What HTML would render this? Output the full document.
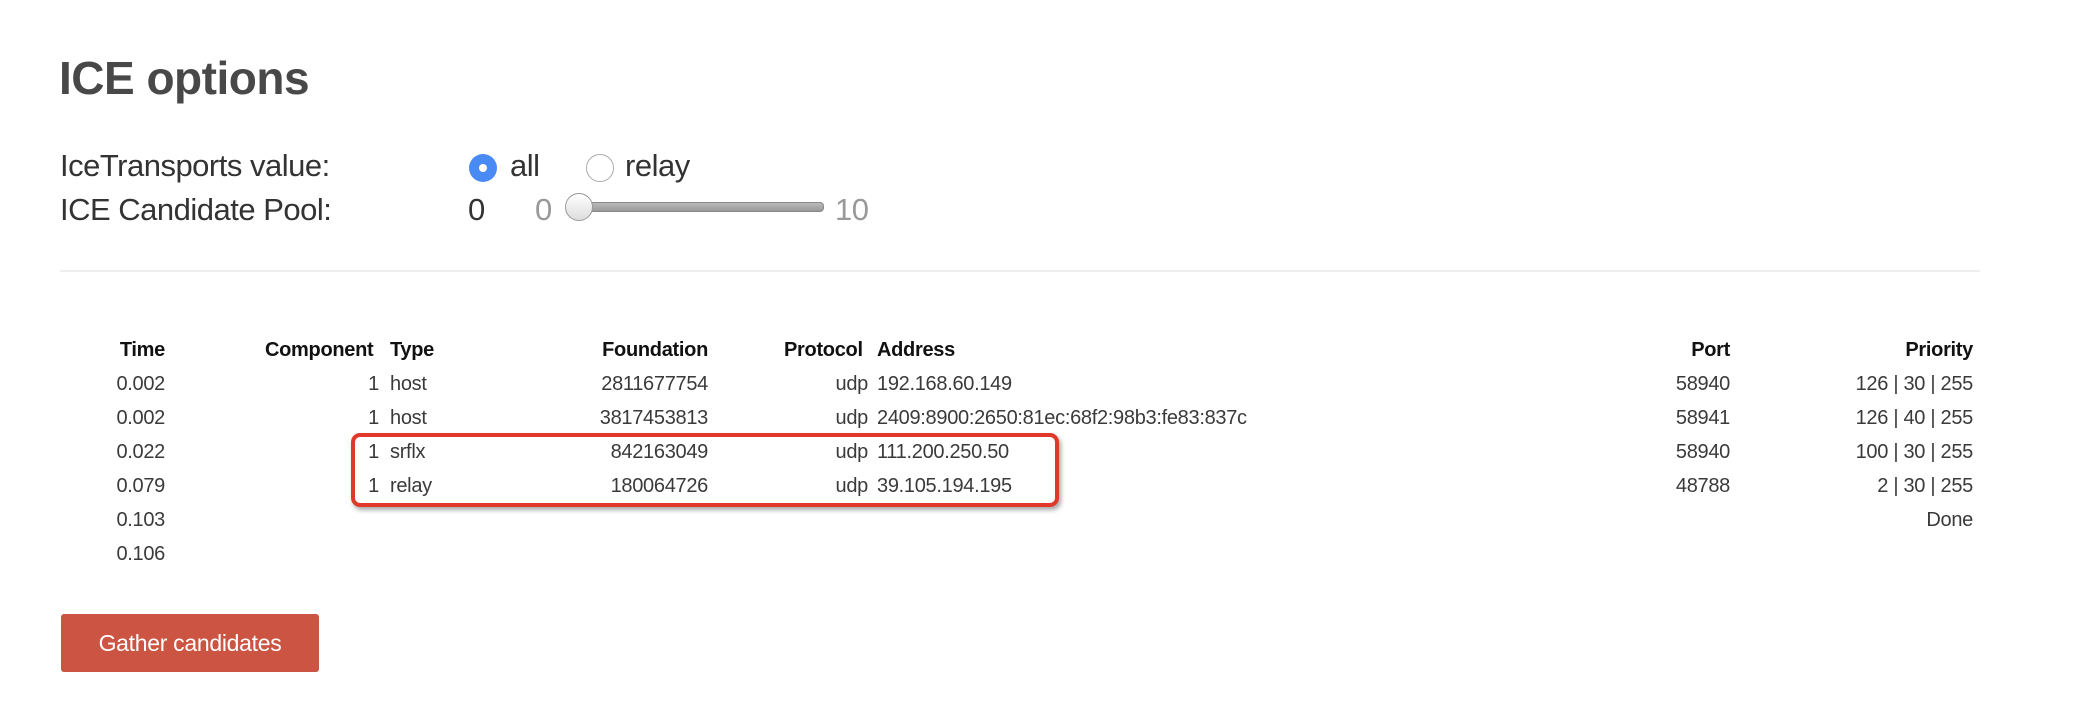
<!DOCTYPE html>
<html><head><meta charset="utf-8"><style>
body{margin:0;width:2098px;height:702px;background:#fff;position:relative;overflow:hidden;font-family:"Liberation Sans",sans-serif;}
.a{position:absolute;white-space:nowrap;line-height:1;}
.o{font-size:31px;color:#333;letter-spacing:-0.5px;}
.h{font-size:20px;font-weight:bold;color:#111;letter-spacing:-0.3px;}
.r{font-size:20px;color:#3a3a3a;letter-spacing:-0.3px;}
</style></head><body>
<div class="a" style="left:59px;top:55px;font-size:46px;font-weight:bold;color:#484848;letter-spacing:-0.5px;">ICE options</div>
<div class="a o" style="left:60px;top:150px;">IceTransports value:</div>
<div class="a" style="left:469px;top:154px;width:28px;height:28px;border-radius:50%;background:#4a8af4;"></div>
<div class="a" style="left:479px;top:164px;width:8px;height:8px;border-radius:50%;background:#fff;"></div>
<div class="a o" style="left:510px;top:150px;">all</div>
<div class="a" style="left:586px;top:154px;width:26px;height:26px;border-radius:50%;border:1px solid #aaa;background:#fff;"></div>
<div class="a o" style="left:625px;top:150px;">relay</div>
<div class="a o" style="left:60px;top:194px;">ICE Candidate Pool:</div>
<div class="a o" style="left:468px;top:194px;">0</div>
<div class="a o" style="left:535px;top:194px;color:#999;">0</div>
<div class="a" style="left:575px;top:202px;width:247px;height:8px;border-radius:4px;background:linear-gradient(#bbb,#999);border:1px solid #888;"></div>
<div class="a" style="left:565px;top:193px;width:26px;height:26px;border-radius:50%;background:linear-gradient(#fff,#ddd);border:1px solid #999;"></div>
<div class="a o" style="left:835px;top:194px;color:#999;">10</div>
<div class="a" style="left:60px;top:270px;width:1920px;height:2px;background:#eee;"></div>

<div class="a h" style="right:1933px;top:340px;">Time</div>
<div class="a h" style="left:265px;top:340px;">Component</div>
<div class="a h" style="left:390px;top:340px;">Type</div>
<div class="a h" style="right:1390px;top:340px;">Foundation</div>
<div class="a h" style="left:784px;top:340px;">Protocol</div>
<div class="a h" style="left:877px;top:340px;">Address</div>
<div class="a h" style="right:368px;top:340px;">Port</div>
<div class="a h" style="right:125px;top:340px;">Priority</div>

<div class="a r" style="right:1933px;top:374px;">0.002</div>
<div class="a r" style="right:1719px;top:374px;">1</div>
<div class="a r" style="left:390px;top:374px;">host</div>
<div class="a r" style="right:1390px;top:374px;">2811677754</div>
<div class="a r" style="right:1230px;top:374px;">udp</div>
<div class="a r" style="left:877px;top:374px;">192.168.60.149</div>
<div class="a r" style="right:368px;top:374px;">58940</div>
<div class="a r" style="right:125px;top:374px;">126 | 30 | 255</div>

<div class="a r" style="right:1933px;top:408px;">0.002</div>
<div class="a r" style="right:1719px;top:408px;">1</div>
<div class="a r" style="left:390px;top:408px;">host</div>
<div class="a r" style="right:1390px;top:408px;">3817453813</div>
<div class="a r" style="right:1230px;top:408px;">udp</div>
<div class="a r" style="left:877px;top:408px;">2409:8900:2650:81ec:68f2:98b3:fe83:837c</div>
<div class="a r" style="right:368px;top:408px;">58941</div>
<div class="a r" style="right:125px;top:408px;">126 | 40 | 255</div>

<div class="a r" style="right:1933px;top:442px;">0.022</div>
<div class="a r" style="right:1719px;top:442px;">1</div>
<div class="a r" style="left:390px;top:442px;">srflx</div>
<div class="a r" style="right:1390px;top:442px;">842163049</div>
<div class="a r" style="right:1230px;top:442px;">udp</div>
<div class="a r" style="left:877px;top:442px;">111.200.250.50</div>
<div class="a r" style="right:368px;top:442px;">58940</div>
<div class="a r" style="right:125px;top:442px;">100 | 30 | 255</div>

<div class="a r" style="right:1933px;top:476px;">0.079</div>
<div class="a r" style="right:1719px;top:476px;">1</div>
<div class="a r" style="left:390px;top:476px;">relay</div>
<div class="a r" style="right:1390px;top:476px;">180064726</div>
<div class="a r" style="right:1230px;top:476px;">udp</div>
<div class="a r" style="left:877px;top:476px;">39.105.194.195</div>
<div class="a r" style="right:368px;top:476px;">48788</div>
<div class="a r" style="right:125px;top:476px;">2 | 30 | 255</div>

<div class="a r" style="right:1933px;top:510px;">0.103</div>
<div class="a r" style="right:125px;top:510px;">Done</div>
<div class="a r" style="right:1933px;top:544px;">0.106</div>

<div class="a" style="left:351px;top:433px;width:700px;height:66px;border:4px solid #e0382b;border-radius:9px;box-shadow:2px 3px 5px rgba(0,0,0,0.35);"></div>

<div class="a" style="left:61px;top:614px;width:258px;height:58px;background:#cb5442;border-radius:3px;color:#fff;font-size:23px;line-height:58px;text-align:center;letter-spacing:-0.3px;">Gather candidates</div>
</body></html>
